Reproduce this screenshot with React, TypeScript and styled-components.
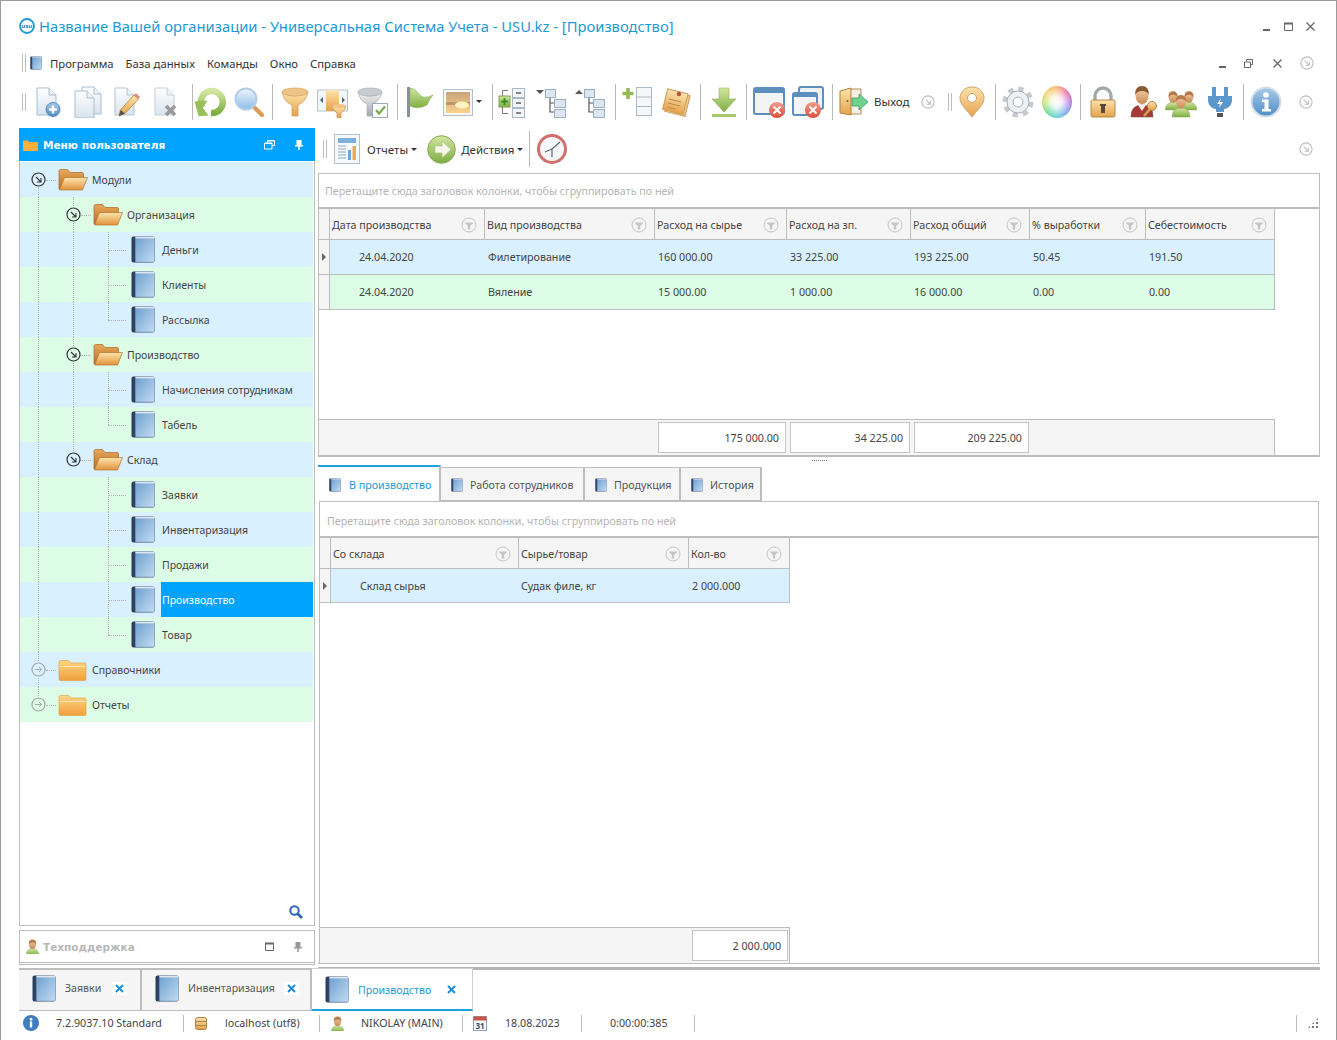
import React from "react";
import styled, { createGlobalStyle } from "styled-components";

const UI_FONT = `"Noto Sans", "Liberation Sans", sans-serif`;

const GlobalStyle = createGlobalStyle`
  html, body {
    margin: 0;
    padding: 0;
    background: #fff;
    overflow: hidden;
  }
  #root {
    height: 1040px;
  }
  * {
    box-sizing: border-box;
  }
`;

/* ---------- shared svg paint ---------- */

const DefsSvg = styled.svg`
  display: block;
  width: 0;
  height: 0;
`;

const grad = (id: string, a: string, b: string, x2 = 0, y2 = 1) => (
  <linearGradient id={id} x1="0" y1="0" x2={x2} y2={y2}>
    <stop offset="0" stopColor={a} />
    <stop offset="1" stopColor={b} />
  </linearGradient>
);

const SharedDefs = () => (
  <DefsSvg aria-hidden="true">
    <defs>
      {grad("gBook", "#6e9fd0", "#c3dcf1", 1, 1)}
      {grad("gSpine", "#2b3d5c", "#55698c", 1, 0)}
      {grad("gFolderBack", "#e9a95a", "#b76d26")}
      {grad("gFolderFront", "#fde6ad", "#e1933b")}
      {grad("gFolderShut", "#fdd684", "#f0a03a")}
      {grad("gPaper", "#ffffff", "#d8e3ee")}
      {grad("gBlue", "#a9cbe9", "#4f8cc4")}
      {grad("gOrange", "#fde3ac", "#e5a24c")}
      {grad("gGreen", "#d2e6a0", "#7fae42")}
      {grad("gGrey", "#f2f2f2", "#a4a9ae")}
      {grad("gRed", "#f29a8a", "#d9503e")}
      {grad("gGlass", "#eef6fd", "#8fbbe6")}
      {grad("gSky", "#c9a27c", "#fbd28c")}
      {grad("gSkin", "#f6cfa8", "#c98a56")}
    </defs>
  </DefsSvg>
);

const Ico: React.FC<{ w?: number; h?: number; vb?: string; children: React.ReactNode }> = ({
  w = 32,
  h = 32,
  vb,
  children,
}) => (
  <svg width={w} height={h} viewBox={vb || `0 0 ${w} ${h}`} style={{ display: "block", flex: "none" }}>
    {children}
  </svg>
);

/* ---------- icons ---------- */

const BookIcon: React.FC<{ w?: number; h?: number }> = ({ w = 24, h = 27 }) => (
  <Ico w={w} h={h} vb="0 0 24 27">
    <rect x="0.5" y="0.5" width="23" height="26" rx="2" fill="url(#gSpine)" />
    <rect x="4.5" y="1" width="19" height="25" rx="1" fill="url(#gBook)" stroke="#7b98b8" strokeWidth="0.6" />
    <rect x="4.5" y="0.8" width="19" height="1.6" fill="#dfe6ee" />
  </Ico>
);

const FolderOpen = () => (
  <Ico w={30} h={23}>
    <path d="M1 21V3q0-1.500 1.500-1.500h7l2.500 3h12q1.500 0 1.500 1.500v4H7L3 21Z" fill="url(#gFolderBack)" stroke="#a9692a" strokeWidth="0.7" />
    <path d="M1.500 22 6.500 9.500H29.500L24.500 22Z" fill="url(#gFolderFront)" stroke="#b8752f" strokeWidth="0.7" />
  </Ico>
);

const FolderShut = () => (
  <Ico w={29} h={22}>
    <path d="M1 3q0-1.500 1.500-1.500h8l2.500 2.500h13.500q1.500 0 1.500 1.500V20q0 1.500-1.500 1.500h-24Q1 21.500 1 20Z" fill="url(#gFolderShut)" stroke="#dd9a3f" strokeWidth="0.6" />
    <rect x="1.500" y="7" width="26" height="1" fill="#fde7b6" />
  </Ico>
);

const RoundArrow: React.FC<{ color?: string; side?: boolean; size?: number }> = ({
  color = "#333",
  side = false,
  size = 15,
}) => (
  <Ico w={size} h={size} vb="0 0 15 15">
    <circle cx="7.500" cy="7.500" r="6.500" fill="none" stroke={color} strokeWidth="1.200" />
    {side ? (
      <path d="M4 7.500h6.500M8 5l2.500 2.500L8 10" fill="none" stroke={color} strokeWidth="1" />
    ) : (
      <path d="M5 5l5 5M10 6v4H6" fill="none" stroke={color} strokeWidth="1.100" />
    )}
  </Ico>
);

const FilterMark = () => (
  <Ico w={16} h={16}>
    <circle cx="8" cy="8" r="7" fill="#f5f5f5" stroke="#c6c6c6" />
    <path d="M3.500 5.500h9L9.200 9v3.500H6.800V9Z" fill="#c6c6c6" />
  </Ico>
);

const Sheet: React.FC<{ x?: number; y?: number; tone?: string }> = ({ x = 0, y = 0, tone = "#a9bdd0" }) => (
  <g transform={`translate(${x} ${y})`}>
    <path d="M6 2H18L25 9V29H6Z" fill="url(#gPaper)" stroke={tone} />
    <path d="M18 2V9H25" fill="#eef3f8" stroke={tone} />
  </g>
);

const NewDocIcon = () => (
  <Ico>
    <Sheet />
    <circle cx="22" cy="23.500" r="7" fill="url(#gBlue)" stroke="#5b8fbd" />
    <path d="M22 19.500v8M18 23.500h8" stroke="#fff" strokeWidth="2.400" />
  </Ico>
);
const CopyDocIcon = () => (
  <Ico>
    <Sheet x={5} y={-1} />
    <Sheet x={-2} y={3} />
  </Ico>
);
const EditDocIcon = () => (
  <Ico>
    <Sheet tone="#b5c4d2" />
    <path d="M10 30l1.500-6L25 9l4.500 4L16 27.500Z" fill="url(#gOrange)" stroke="#b8803c" strokeWidth="0.8" />
    <path d="M10 30l1.500-6 4.500 3.500Z" fill="#5b5147" />
    <path d="M25 9l4.500 4 1.500-2-4-4Z" fill="#d98b7e" />
  </Ico>
);
const DeleteDocIcon = () => (
  <Ico>
    <Sheet tone="#c9cfd5" />
    <path d="M17 20l9 9M26 20l-9 9" stroke="#9a9a9a" strokeWidth="3.600" />
  </Ico>
);
const RefreshIcon = () => (
  <Ico>
    <path d="M8 21A11 11 0 1 1 17 27" fill="none" stroke="url(#gGreen)" strokeWidth="6.500" />
    <path d="M1 15h13L9 22l5 8H4Z" fill="#98bf58" transform="rotate(-4 8 22)" />
  </Ico>
);
const SearchIcon = () => (
  <Ico>
    <path d="M20 20l9 9" stroke="#dd9b55" strokeWidth="4.200" strokeLinecap="round" />
    <circle cx="13" cy="13" r="10.500" fill="url(#gGlass)" stroke="#b3cde4" strokeWidth="2" />
  </Ico>
);
const FunnelIcon = () => (
  <Ico>
    <path d="M3 6q13 8 26 0q-2 10-10 13v11h-6V19Q5 16 3 6Z" fill="url(#gOrange)" stroke="#c89555" strokeWidth="0.7" />
    <ellipse cx="16" cy="6" rx="13" ry="4" fill="#eec384" stroke="#d4a261" strokeWidth="0.7" />
  </Ico>
);
const ColumnFunnelIcon = () => (
  <Ico>
    <rect x="0.500" y="4" width="30" height="21" fill="#f2f6fa" stroke="#b7c4d0" />
    <rect x="9" y="4" width="13" height="21" fill="url(#gOrange)" />
    <path d="M6 11v6l-3-3ZM25 11v6l3-3Z" fill="#556270" />
    <path d="M15 20q7 3 14 0q-1 5-5 7v5h-4v-5q-4-2-5-7Z" fill="url(#gOrange)" stroke="#bb8a4c" strokeWidth="0.6" />
    <ellipse cx="22" cy="20" rx="7" ry="2" fill="#eec384" />
  </Ico>
);
const GreyFunnelIcon = () => (
  <Ico>
    <path d="M1 6q12 8 24 0q-2 9-9 12v12h-6V18Q3 15 1 6Z" fill="url(#gGrey)" stroke="#a8adb2" strokeWidth="0.7" />
    <ellipse cx="13" cy="6" rx="12" ry="4" fill="#c8ccd0" stroke="#a8adb2" strokeWidth="0.7" />
    <rect x="15.500" y="17.500" width="15" height="14" fill="#fbfdff" stroke="#97a9ba" />
    <path d="M19 24l3 3.500 6-7" fill="none" stroke="#79a948" strokeWidth="2.200" />
  </Ico>
);
const FlagIcon = () => (
  <Ico>
    <rect x="3" y="1" width="3" height="30" fill="#87919a" />
    <path d="M6 2q5 0 9 6t14 1q-4 5-6 10-9 5-17 1Z" fill="url(#gGreen)" stroke="#8fae62" strokeWidth="0.6" />
  </Ico>
);
const PictureIcon = () => (
  <Ico>
    <rect x="1.500" y="3.500" width="29" height="26" fill="#f6f8fb" stroke="#b6bec7" />
    <rect x="4" y="6" width="24" height="21" fill="url(#gSky)" />
    <rect x="4" y="16" width="24" height="3" fill="#8c6f50" opacity="0.45" />
    <ellipse cx="20" cy="19" rx="7" ry="3.500" fill="#fff3c4" />
  </Ico>
);
const Box: React.FC<{ x: number; y: number; w?: number; h?: number }> = ({ x, y, w = 11, h = 8 }) => (
  <rect x={x} y={y} width={w} height={h} fill="#dbe6f1" stroke="#9cb0c4" />
);
const TreeAddIcon = () => (
  <Ico>
    <path d="M10 4.500H4.500V27.500H10" fill="none" stroke="#777" />
    <rect x="1" y="10" width="11" height="11" fill="url(#gGreen)" stroke="#7fa04c" />
    <path d="M6.500 12v7M3 15.500h7" stroke="#3f8c2a" strokeWidth="2" />
    {[2, 12, 22].map((y) => (
      <g key={y}>
        <rect x="14.500" y={y + 0.500} width="12" height="9" fill="#f2f6fa" stroke="#a9b8c6" />
        <path d={`M18 ${y + 5}h5`} stroke="#555" strokeWidth="1.400" />
      </g>
    ))}
  </Ico>
);
const TreeIcon: React.FC<{ up?: boolean }> = ({ up }) => (
  <Ico>
    <path d={up ? "M1 8l4-4 4 4Z" : "M1 4h8L5 8Z"} fill="#555" />
    <path d="M15 11V26H19M15 17H19" fill="none" stroke="#555" strokeWidth="1.200" />
    <Box x={10.500} y={3.500} w={10} />
    <Box x={19.500} y={13.500} />
    <Box x={19.500} y={23.500} />
  </Ico>
);
const PlusListIcon = () => (
  <Ico>
    <path d="M6 2v11M0.500 7.500h11" stroke="#93bb55" strokeWidth="3.600" />
    <rect x="14.500" y="1.500" width="15" height="28" fill="#f5f8fb" stroke="#a9b8c6" />
    <path d="M14.500 11h15M14.500 20.500h15" stroke="#a9b8c6" />
  </Ico>
);
const NotesIcon = () => (
  <Ico>
    <rect x="6" y="7" width="21" height="21" fill="#f0c98a" stroke="#c99a5a" transform="rotate(14 16 17)" />
    <rect x="4" y="5" width="21" height="21" fill="url(#gOrange)" stroke="#c99a5a" transform="rotate(14 14 15)" />
    <path d="M8 13l12 3M7 17l12 3M6 21l8 2" stroke="#b58a52" strokeWidth="1" />
    <circle cx="18" cy="8" r="2.200" fill="#c9493e" />
  </Ico>
);
const DownloadIcon = () => (
  <Ico>
    <path d="M11 2h10v11h7L16 26 4 13h7Z" fill="url(#gGreen)" stroke="#93b25c" strokeWidth="0.6" />
    <rect x="4" y="28" width="24" height="3" fill="#a7c66e" />
  </Ico>
);
const RedCross: React.FC<{ x: number; y: number }> = ({ x, y }) => (
  <g>
    <circle cx={x} cy={y} r="8" fill="url(#gRed)" />
    <path d={`M${x - 3.500} ${y - 3.500}l7 7M${x + 3.500} ${y - 3.500}l-7 7`} stroke="#fff" strokeWidth="2" />
  </g>
);
const WindowCloseIcon = () => (
  <Ico>
    <rect x="1" y="2" width="30" height="26" rx="2" fill="#f3f4f6" stroke="#5c8fbe" strokeWidth="2" />
    <rect x="1" y="2" width="30" height="5" fill="#5c8fbe" />
    <RedCross x={24} y={24} />
  </Ico>
);
const WindowsCloseIcon = () => (
  <Ico>
    <rect x="7" y="1" width="24" height="22" rx="2" fill="#eef2f6" stroke="#5c8fbe" strokeWidth="2" />
    <rect x="1" y="7" width="24" height="22" rx="2" fill="#f3f4f6" stroke="#5c8fbe" strokeWidth="2" />
    <rect x="1" y="7" width="24" height="4" fill="#5c8fbe" />
    <RedCross x={21} y={24} />
  </Ico>
);
const DoorIcon = () => (
  <Ico>
    <path d="M10 3h13v25H10Z" fill="#f6f0e6" stroke="#b58a52" />
    <path d="M2 5l11-3v27L2 27Z" fill="url(#gOrange)" stroke="#b0803f" />
    <circle cx="9.500" cy="15" r="1" fill="#7a5a30" />
    <path d="M14 12h7V8l9 8-9 8v-4h-7Z" fill="#6fd38e" stroke="#3f9a63" strokeWidth="0.8" />
  </Ico>
);
const PinIcon = () => (
  <Ico>
    <path d="M16 1C8 1 4 7 4 12c0 7 8 13 12 19 4-6 12-12 12-19C28 7 24 1 16 1Z" fill="url(#gOrange)" stroke="#d2a565" />
    <circle cx="16" cy="12" r="4.500" fill="#fff" stroke="#d2a565" />
  </Ico>
);
const GearIcon = () => (
  <Ico>
    <circle cx="16" cy="16" r="13" fill="none" stroke="#c5cad0" strokeWidth="5" strokeDasharray="5.200 5" />
    <circle cx="16" cy="16" r="11" fill="#eef0f3" stroke="#a9afb7" />
    <circle cx="16" cy="16" r="5" fill="#fff" stroke="#a9afb7" />
  </Ico>
);
const ColorWheel = styled.span`
  display: block;
  flex: none;
  width: 30px;
  height: 32px;
  margin: 0 1px;
  border-radius: 50%;
  background:
    radial-gradient(circle at 50% 50%, #ffffff 0, rgba(255, 255, 255, 0.85) 25%, rgba(255, 255, 255, 0) 75%),
    conic-gradient(#f7b267, #f25fa8, #b06ad8, #6a9be8, #5fd0d8, #62d88a, #c9e060, #f7d267, #f7b267);
`;
const LockIcon = () => (
  <Ico>
    <path d="M8 15V10a8 8 0 0 1 16 0v5" fill="none" stroke="#a3a8ad" strokeWidth="3.400" />
    <rect x="4" y="14" width="24" height="17" rx="1.500" fill="url(#gOrange)" stroke="#b98a48" />
    <rect x="14" y="18" width="4" height="9" fill="#5a4a36" />
    <rect x="13" y="18" width="6" height="2" fill="#5a4a36" />
  </Ico>
);
const UserKeyIcon = () => (
  <Ico>
    <path d="M4 31q0-12 11-12t11 12Z" fill="#a63a36" stroke="#7d5048" strokeWidth="0.600" />
    <path d="M11 19l4 6 4-6Z" fill="#f4f0ea" />
    <ellipse cx="15" cy="10" rx="6.500" ry="8" fill="url(#gSkin)" />
    <path d="M8 9q0-9 7-9t7 9q-2-4-7-4T8 9Z" fill="#8c5a34" />
    <circle cx="25" cy="20" r="4.500" fill="url(#gOrange)" stroke="#b0803f" />
    <path d="M23 23l-6 7" stroke="#d4a056" strokeWidth="2.600" />
  </Ico>
);
const Person: React.FC<{ x: number; y: number; s?: number }> = ({ x, y, s = 1 }) => (
  <g transform={`translate(${x} ${y}) scale(${s})`}>
    <path d="M-9 20q0-9 9-9t9 9Z" fill="url(#gGreen)" stroke="#84a65a" strokeWidth="0.500" />
    <ellipse cx="0" cy="5" rx="5" ry="6.500" fill="url(#gSkin)" />
    <path d="M-5.500 5q0-7 5.500-7t5.500 7q-2-3-5.500-3t-5.500 3Z" fill="#b77c4a" />
  </g>
);
const UsersIcon = () => (
  <Ico>
    <Person x={8} y={7} s={0.85} />
    <Person x={24} y={7} s={0.85} />
    <Person x={16} y={11} />
  </Ico>
);
const PlugIcon = () => (
  <Ico>
    <rect x="8" y="1" width="4" height="11" fill="#5b96cc" />
    <rect x="20" y="1" width="4" height="11" fill="#5b96cc" />
    <path d="M4 10h24v4c0 6-5 9-8 9v3h-8v-3c-3 0-8-3-8-9Z" fill="#5b96cc" />
    <path d="M17 12l-4 6h3l-1 4 4-6h-3Z" fill="#fff" />
    <rect x="13" y="27" width="6" height="4" fill="#555" />
  </Ico>
);
const InfoIcon = () => (
  <Ico>
    <circle cx="16" cy="16" r="14.500" fill="url(#gBlue)" stroke="#d4dee8" strokeWidth="2" />
    <circle cx="16" cy="9" r="2.800" fill="#fff" />
    <path d="M12 13.500h6.500V23H21v2.500h-9V23h2.500v-7H12Z" fill="#fff" />
  </Ico>
);
const ReportIcon = () => (
  <Ico w={26} h={30} vb="0 0 26 30">
    <rect x="0.500" y="0.500" width="25" height="29" fill="#f6f9fc" stroke="#b2c0cd" />
    <rect x="4" y="4" width="18" height="5" fill="#7fb0dd" />
    <path d="M4 12h8M4 15h8M4 18h8M4 21h8M4 24h8" stroke="#8fa8c0" />
    <rect x="14" y="16" width="3" height="10" fill="#6fa5d8" />
    <rect x="18.500" y="12" width="3.500" height="14" fill="#eda95a" />
  </Ico>
);
const ActionIcon = () => (
  <Ico w={29} h={29}>
    <circle cx="14.500" cy="14.500" r="13.800" fill="url(#gGreen)" stroke="#8aa958" />
    <path d="M8 11h7V6l9 8.500-9 8.500v-5H8Z" fill="#f4f7ea" stroke="#a5bd78" strokeWidth="0.600" />
  </Ico>
);
const ClockIcon = () => (
  <Ico w={30} h={30}>
    <circle cx="15" cy="15" r="13.500" fill="#f4f6f7" stroke="#d0706a" strokeWidth="3" />
    <path d="M15 15L8 18M15 15L23 8M15 15v8" stroke="#5e6a70" strokeWidth="1.200" />
  </Ico>
);
const LogoIcon = () => (
  <Ico w={16} h={16}>
    <circle cx="8" cy="8" r="7" fill="#fff" stroke="#1c9ad6" strokeWidth="1.800" />
    <text x="8" y="10" textAnchor="middle" fontSize="6" fontWeight="700" fontFamily={UI_FONT} fill="#1c7fc0">
      usu
    </text>
  </Ico>
);
const SmallBook = () => <BookIcon w={12} h={14} />;
const MagnifierIcon = () => (
  <Ico w={14} h={14}>
    <circle cx="5.500" cy="5.500" r="4.200" fill="none" stroke="#2a66b5" strokeWidth="2" />
    <path d="M8.500 8.500L13 13" stroke="#2a66b5" strokeWidth="2.600" />
  </Ico>
);
const SupportIcon = () => (
  <Ico w={15} h={15}>
    <Person x={7.500} y={2} s={0.7} />
  </Ico>
);
const StatusInfoIcon = () => (
  <Ico w={16} h={16}>
    <circle cx="8" cy="8" r="8" fill="#3f7ebd" />
    <circle cx="8" cy="4.300" r="1.400" fill="#fff" />
    <rect x="6.800" y="6.500" width="2.400" height="6" fill="#fff" />
  </Ico>
);
const DatabaseIcon = () => (
  <Ico w={12} h={15}>
    <rect x="0.500" y="1.500" width="11" height="12" rx="2" fill="url(#gOrange)" stroke="#b0803f" />
    <path d="M1 5.500h10M1 9.500h10" stroke="#b0803f" />
  </Ico>
);
const CalendarIcon = () => (
  <Ico w={14} h={15}>
    <rect x="0.500" y="0.500" width="13" height="14" fill="#f6f8fb" stroke="#8ea3b8" />
    <rect x="0.500" y="0.500" width="13" height="4" fill="#c9534a" />
    <text x="7" y="13" textAnchor="middle" fontSize="8" fontWeight="700" fontFamily={UI_FONT} fill="#33506e">
      31
    </text>
  </Ico>
);
const HeaderFolderIcon = () => (
  <Ico w={15} h={11}>
    <path d="M0 1.500q0-1 1-1h4l1 1.500h8q1 0 1 1V10q0 1-1 1H1q-1 0-1-1Z" fill="#fbb040" />
  </Ico>
);
const PanelRestoreIcon = () => (
  <Ico w={11} h={10}>
    <path d="M3.500 2.500V.5h7v5h-2.500M.5 3h7.500v6H.5Z" fill="none" stroke="#fff" />
    <path d="M3.500 1h7M.5 3.500h7.500" stroke="#fff" />
  </Ico>
);
const PinGlyph: React.FC<{ color: string }> = ({ color }) => (
  <Ico w={8} h={10}>
    <path d="M1.500 0h5v5h1.500v1.500H4.800V10H3.200V6.500H0V5h1.500Z" fill={color} />
  </Ico>
);
const WinMin = () => (
  <Ico w={9} h={9}>
    <rect x="1" y="7" width="7" height="2" fill="#666" />
  </Ico>
);
const WinMax = () => (
  <Ico w={9} h={9}>
    <path d="M.5 1.500h8v7h-8Z" fill="none" stroke="#666" />
    <rect x="0" y="0.500" width="9" height="2" fill="#666" />
  </Ico>
);
const WinRestore = () => (
  <Ico w={9} h={9}>
    <path d="M2.500 2V.5h6v5H7M.5 3h6v5.500h-6Z" fill="none" stroke="#666" />
  </Ico>
);
const WinClose = () => (
  <Ico w={9} h={9}>
    <path d="M.5.500l8 8M8.500.500l-8 8" stroke="#666" strokeWidth="1.300" />
  </Ico>
);
const TabCross = () => (
  <Ico w={9} h={9}>
    <path d="M1 1l7 7M8 1l-7 7" stroke="#1c8fd8" strokeWidth="2" />
  </Ico>
);

/* ---------- window, title, menu ---------- */

const Window = styled.div`
  height: 1040px;
  display: flex;
  flex-direction: column;
  border: 1px solid #9b9b9b;
  border-bottom: 0;
  font-family: ${UI_FONT};
  color: #444;
  overflow: hidden;
`;

const TitleBar = styled.div`
  flex: none;
  height: 52px;
  display: flex;
  align-items: center;
  padding: 0 21px 2px 18px;
  color: #1c9ad6;
  font-size: 14.75px;
`;

const TitleText = styled.span`
  margin-left: 4px;
  white-space: nowrap;
`;

const WindowButtons = styled.div<{ $gap: number }>`
  margin-left: auto;
  display: flex;
  align-items: center;
  gap: ${(p) => p.$gap}px;
`;

const MenuBar = styled.div`
  flex: none;
  height: 20px;
  display: flex;
  align-items: center;
  padding: 0 22px 0 21px;
  font-size: 11.3px;
  color: #333;
`;

const Gripper = styled.span`
  flex: none;
  width: 4px;
  height: 18px;
  border-left: 1px solid #bdbdbd;
  border-right: 1px solid #bdbdbd;
`;

const MenuBook = styled.span`
  margin: 0 8px 0 4px;
`;

const MenuItem = styled.span`
  margin-right: 12px;
  white-space: nowrap;
`;

const MenuControls = styled.div`
  margin-left: auto;
  display: flex;
  align-items: center;
`;

const MenuControl = styled.span<{ $ml: number }>`
  margin-left: ${(p) => p.$ml}px;
`;

/* ---------- main toolbar ---------- */

const ToolBar = styled.div`
  flex: none;
  height: 55px;
  padding: 2px 0 0 21px;
  display: flex;
  align-items: center;
`;

const ToolSlot = styled.span<{ $ml: number }>`
  flex: none;
  display: flex;
  align-items: center;
  margin-left: ${(p) => p.$ml}px;
`;

const ToolSep = styled.span<{ $ml: number }>`
  flex: none;
  width: 1px;
  height: 36px;
  background: #b9b9b9;
  margin-left: ${(p) => p.$ml}px;
`;

const Caret = styled.span`
  display: block;
  width: 0;
  height: 0;
  border-left: 3px solid transparent;
  border-right: 3px solid transparent;
  border-top: 3px solid #333;
`;

const ExitLabel = styled.span`
  font-size: 11.5px;
  color: #333;
  width: 36px;
  white-space: nowrap;
`;

/* ---------- main area ---------- */

const Main = styled.div`
  flex: none;
  height: 842px;
  display: flex;
  padding-left: 18px;
  gap: 3px;
`;

const LeftColumn = styled.div`
  flex: none;
  width: 296px;
  display: flex;
  flex-direction: column;
  gap: 4px;
`;

const MenuPanel = styled.div`
  flex: none;
  height: 798px;
  display: flex;
  flex-direction: column;
  border: 1px solid #bdbdbd;
  border-top: 0;
`;

const PanelHeader = styled.div`
  flex: none;
  height: 33px;
  margin: 0 -1px 1px;
  padding: 1px 12px 0 4px;
  display: flex;
  align-items: center;
  background: #00a4ff;
  color: #fff;
`;

const PanelTitle = styled.span<{ $muted?: boolean }>`
  margin-left: ${(p) => (p.$muted ? 3 : 5)}px;
  font-family: "DejaVu Sans", sans-serif;
  font-size: 10.5px;
  font-weight: 700;
  color: ${(p) => (p.$muted ? "#b8b8b8" : "#fff")};
`;

const PanelIcons = styled.span`
  margin-left: auto;
  display: flex;
  align-items: center;
  gap: 20px;
`;

const TreeList = styled.div`
  flex: none;
`;

const TreeRowBox = styled.div<{ $even: boolean }>`
  height: 35px;
  margin-right: 1px;
  padding-left: 1px;
  display: flex;
  align-items: center;
  background: ${(p) => (p.$even ? "#d9f0ff" : "#dcfce6")};
  font-size: 10.5px;
  color: #444;
`;

const Slot = styled.span<{ $up: boolean; $down: boolean; $branch: boolean; $knob: boolean }>`
  flex: none;
  position: relative;
  width: 35px;
  height: 100%;
  display: flex;
  align-items: center;
  justify-content: center;

  &::before {
    content: "";
    display: ${(p) => (p.$up || p.$down ? "block" : "none")};
    position: absolute;
    left: 17px;
    top: ${(p) => (p.$up ? "0" : "calc(50% + 7px)")};
    bottom: ${(p) => (p.$down ? "0" : p.$knob ? "calc(50% + 7px)" : "50%")};
    border-left: 1px dotted #b4b4b4;
  }

  &::after {
    content: "";
    display: ${(p) => (p.$branch ? "block" : "none")};
    position: absolute;
    left: ${(p) => (p.$knob ? 25 : 17)}px;
    right: 0;
    top: 50%;
    border-top: 1px dotted #b4b4b4;
  }
`;

/* a knob sits on top of the dotted line that runs through its slot */
const Knob = styled.span<{ $bg: string }>`
  position: relative;
  z-index: 1;
  border-radius: 50%;
  background: ${(p) => p.$bg};
`;

const TreeIconBox = styled.span<{ $ml: number }>`
  flex: none;
  margin-left: ${(p) => p.$ml}px;
`;

const TreeLabel = styled.span<{ $ml: number; $selected?: boolean }>`
  align-self: stretch;
  flex: 1;
  display: flex;
  align-items: center;
  margin-left: ${(p) => p.$ml}px;
  padding-left: 1px;
  white-space: nowrap;
  background: ${(p) => (p.$selected ? "#00a4ff" : "transparent")};
  color: ${(p) => (p.$selected ? "#fff" : "#444")};
`;

const PanelFoot = styled.div`
  margin-top: auto;
  height: 27px;
  padding-right: 11px;
  display: flex;
  align-items: center;
  justify-content: flex-end;
`;

const SupportPanel = styled.div`
  flex: none;
  height: 35px;
  display: flex;
  align-items: center;
  padding: 0 12px 0 5px;
  border: 1px solid #bdbdbd;
  border-bottom: 3px double #bdbdbd;
`;

const RightColumn = styled.div`
  flex: none;
  width: 1002px;
  display: flex;
  flex-direction: column;
`;

const SubBar = styled.div`
  flex: none;
  height: 45px;
  padding: 0 6px 3px 5px;
  display: flex;
  align-items: center;
  font-size: 11.5px;
  color: #333;
`;

const SubLabel = styled.span<{ $ml: number }>`
  margin-left: ${(p) => p.$ml}px;
  display: flex;
  align-items: center;
  gap: 3px;
  white-space: nowrap;
`;

const SubSep = styled.span`
  flex: none;
  width: 1px;
  height: 36px;
  margin: 0 7px 0 6px;
  background: #b9b9b9;
`;

const SubIcon = styled.span<{ $ml: number }>`
  flex: none;
  margin-left: ${(p) => p.$ml}px;
`;

const SubEnd = styled.span`
  margin-left: auto;
  margin-right: 1px;
`;

/* ---------- data grids ---------- */

const GridFrame = styled.div<{ $height?: number }>`
  display: flex;
  flex-direction: column;
  border-left: 1px solid #bdbdbd;
  border-right: 1px solid #bdbdbd;
  ${(p) => (p.$height ? `flex: none; height: ${p.$height}px;` : "flex: 1; min-height: 0;")}
`;

const GroupHint = styled.div<{ $height?: number; $top?: number; $left?: number }>`
  flex: none;
  height: ${(p) => p.$height ?? 36}px;
  padding: ${(p) => p.$top ?? 1}px 0 0 ${(p) => p.$left ?? 6}px;
  display: flex;
  align-items: center;
  border-top: 1px solid #bdbdbd;
  border-bottom: 2px solid #bdbdbd;
  font-size: 10.7px;
  color: #b4b4b4;
  white-space: nowrap;
`;

const GridRow = styled.div<{ $cols: string; $height: number; $tone?: string; $width: number }>`
  flex: none;
  display: grid;
  grid-template-columns: ${(p) => p.$cols};
  width: ${(p) => p.$width}px;
  height: ${(p) => p.$height}px;
  background: ${(p) => p.$tone || "#f5f5f5"};
  border-bottom: 1px solid #bdbdbd;
  border-right: 1px solid #bdbdbd;
  font-size: 10.7px;
  color: #444;
`;

const HeadCell = styled.div`
  display: flex;
  align-items: center;
  justify-content: space-between;
  padding: 1px 7px 0 2px;
  border-right: 1px solid #bdbdbd;
  white-space: nowrap;

  &:last-child {
    border-right: 0;
  }
`;

const Indicator = styled.div`
  display: flex;
  align-items: center;
  justify-content: center;
  background: #f5f5f5;
  border-right: 1px solid #bdbdbd;
`;

const RowMarker = styled.span`
  display: block;
  width: 0;
  height: 0;
  border-top: 4px solid transparent;
  border-bottom: 4px solid transparent;
  border-left: 4px solid #666;
`;

const DataCell = styled.div<{ $pad?: number; $low?: boolean }>`
  display: flex;
  align-items: center;
  padding-left: ${(p) => p.$pad ?? 3}px;
  padding-bottom: ${(p) => (p.$low ? 0 : 1)}px;
  white-space: nowrap;
`;

const GridBody = styled.div`
  flex: 1;
  min-height: 0;
`;

const FooterRow = styled.div<{ $cols: string; $width: number; $height: number }>`
  flex: none;
  display: grid;
  grid-template-columns: ${(p) => p.$cols};
  width: ${(p) => p.$width}px;
  height: ${(p) => p.$height}px;
  background: #f5f5f5;
  border-top: 1px solid #bdbdbd;
  border-right: 1px solid #bdbdbd;
  font-size: 10.7px;
  color: #444;
`;

const SumBox = styled.div`
  margin: 2px 1px 2px 3px;
  padding-right: 6px;
  display: flex;
  align-items: center;
  justify-content: flex-end;
  background: #fff;
  border: 1px solid #c4c4c4;
  white-space: nowrap;
`;

const FrameRule = styled.div`
  flex: none;
  height: 2px;
  margin: 0 -1px;
  background: #bdbdbd;
`;

const Splitter = styled.div`
  flex: none;
  height: 8px;
  display: flex;
  align-items: center;
  justify-content: center;
`;

const SplitDots = styled.span`
  display: block;
  width: 15px;
  margin-top: -2px;
  border-top: 1px dotted #777;
`;

const TabStrip = styled.div`
  flex: none;
  height: 36px;
  display: flex;
  align-items: flex-end;
`;

const DetailTab = styled.div<{ $active?: boolean; $width: number }>`
  flex: none;
  width: ${(p) => p.$width}px;
  height: ${(p) => (p.$active ? 36 : 34)}px;
  display: flex;
  align-items: center;
  gap: ${(p) => (p.$active ? 8 : 7)}px;
  padding-left: ${(p) => (p.$active ? 11 : 10)}px;
  padding-top: 1px;
  font-size: 10.7px;
  white-space: nowrap;
  background: ${(p) => (p.$active ? "#fff" : "#f5f5f5")};
  color: ${(p) => (p.$active ? "#1c9ad6" : "#555")};
  border-top: ${(p) => (p.$active ? "2px solid #1da1e0" : "1px solid #bdbdbd")};
  border-right: 2px solid #bdbdbd;
  border-bottom: ${(p) => (p.$active ? "0" : "1px solid #bdbdbd")};
`;

const DetailBox = styled.div`
  flex: 1;
  min-height: 0;
  margin: 0 1px;
  display: flex;
  flex-direction: column;
`;

const FrameBase = styled.div`
  flex: none;
  height: 7px;
  margin: 0 -1px;
  border-top: 1px solid #bdbdbd;
  border-bottom: 3px solid #b5b5b5;
`;

/* ---------- bottom strip and status bar ---------- */

const DocBar = styled.div`
  flex: none;
  height: 43px;
  margin-top: -2px;
  padding-left: 18px;
  display: flex;
`;

const DocTab = styled.div<{ $active?: boolean; $width: number }>`
  flex: none;
  width: ${(p) => p.$width}px;
  display: flex;
  align-items: center;
  padding: ${(p) => (p.$active ? "1px 0 0 13px" : "0 0 4px 13px")};
  font-size: 10.6px;
  white-space: nowrap;
  background: ${(p) => (p.$active ? "#fff" : "#f5f5f5")};
  color: ${(p) => (p.$active ? "#1c9ad6" : "#555")};
  border-top: ${(p) => (p.$active ? "1px solid #d0d0d0" : "2px solid #bdbdbd")};
  border-right: ${(p) => (p.$active ? "1px solid #d0d0d0" : "2px solid #bdbdbd")};
  border-bottom: ${(p) => (p.$active ? "2px solid #1da1e0" : "1px solid #bdbdbd")};
`;

const DocLabel = styled.span`
  margin-left: 9px;
`;

const DocClose = styled.span<{ $mr: number }>`
  margin-left: auto;
  margin-right: ${(p) => p.$mr}px;
  padding: 2px 3px;
  background: #fff;
`;

const StatusBar = styled.div`
  flex: 1;
  display: flex;
  align-items: center;
  padding: 0 0 5px 22px;
  font-size: 10.7px;
  color: #444;
  white-space: nowrap;
`;

const StatusText = styled.span<{ $ml: number; $width: number }>`
  flex: none;
  margin-left: ${(p) => p.$ml}px;
  width: ${(p) => p.$width}px;
`;

const StatusSep = styled.span<{ $ml: number }>`
  flex: none;
  width: 1px;
  height: 17px;
  background: #bdbdbd;
  margin-left: ${(p) => p.$ml}px;
`;

const StatusIcon = styled.span<{ $ml: number }>`
  flex: none;
  margin-left: ${(p) => p.$ml}px;
`;

const ResizeGrip = styled.span`
  flex: none;
  margin-left: 10px;
  width: 12px;
  height: 12px;
  background-image: radial-gradient(circle, #777 0.8px, transparent 1px);
  background-size: 4px 4px;
  clip-path: polygon(100% 0, 100% 100%, 0 100%);
`;

/* ---------- data ---------- */

type TreeItem = { label: string; icon: "open" | "shut" | "book"; slots: string; selected?: boolean };

// slot codes: | line, space nothing, T branch, L last branch,
// o root knob, O knob on line, U last knob, c closed knob on line, C last closed knob
const treeItems: TreeItem[] = [
  { label: "Модули", icon: "open", slots: "o" },
  { label: "Организация", icon: "open", slots: "|O" },
  { label: "Деньги", icon: "book", slots: "||T" },
  { label: "Клиенты", icon: "book", slots: "||T" },
  { label: "Рассылка", icon: "book", slots: "||L" },
  { label: "Производство", icon: "open", slots: "|O" },
  { label: "Начисления сотрудникам", icon: "book", slots: "||T" },
  { label: "Табель", icon: "book", slots: "||L" },
  { label: "Склад", icon: "open", slots: "|U" },
  { label: "Заявки", icon: "book", slots: "| T" },
  { label: "Инвентаризация", icon: "book", slots: "| T" },
  { label: "Продажи", icon: "book", slots: "| T" },
  { label: "Производство", icon: "book", slots: "| T", selected: true },
  { label: "Товар", icon: "book", slots: "| L" },
  { label: "Справочники", icon: "shut", slots: "c" },
  { label: "Отчеты", icon: "shut", slots: "C" },
];

const TreeSlot: React.FC<{ code: string; bg: string }> = ({ code, bg }) => {
  const knob = "oOUcC".includes(code);
  const closed = code === "c" || code === "C";
  return (
    <Slot
      $up={"|TLOUcC".includes(code)}
      $down={"|ToOc".includes(code)}
      $branch={knob || code === "T" || code === "L"}
      $knob={knob}
    >
      {knob && (
        <Knob $bg={bg}>
          <RoundArrow color={closed ? "#a9a9a9" : "#333"} side={closed} />
        </Knob>
      )}
    </Slot>
  );
};

const topCols = "11px 155px 170px 132px 124px 119px 116px 128px";
const topHeads = ["Дата производства", "Вид производства", "Расход на сырье", "Расход на зп.", "Расход общий", "% выработки", "Себестоимость"];
const topRows = [
  { tone: "#d9f0ff", marker: true, cells: ["24.04.2020", "Филетирование", "160 000.00", "33 225.00", "193 225.00", "50.45", "191.50"] },
  { tone: "#dcfce6", marker: false, cells: ["24.04.2020", "Вяление", "15 000.00", "1 000.00", "16 000.00", "0.00", "0.00"] },
];

const detailCols = "11px 188px 170px 100px";
const detailHeads = ["Со склада", "Сырье/товар", "Кол-во"];

const App: React.FC = () => (
  <>
    <GlobalStyle />
    <SharedDefs />
    <Window>
      <TitleBar>
        <LogoIcon />
        <TitleText>Название Вашей организации - Универсальная Система Учета - USU.kz - [Производство]</TitleText>
        <WindowButtons $gap={13}>
          <WinMin />
          <WinMax />
          <WinClose />
        </WindowButtons>
      </TitleBar>

      <MenuBar>
        <Gripper />
        <MenuBook>
          <SmallBook />
        </MenuBook>
        {["Программа", "База данных", "Команды", "Окно", "Справка"].map((m) => (
          <MenuItem key={m}>{m}</MenuItem>
        ))}
        <MenuControls>
          <MenuControl $ml={0}>
            <WinMin />
          </MenuControl>
          <MenuControl $ml={17}>
            <WinRestore />
          </MenuControl>
          <MenuControl $ml={20}>
            <WinClose />
          </MenuControl>
          <MenuControl $ml={18}>
            <RoundArrow color="#bdbdbd" size={14} />
          </MenuControl>
        </MenuControls>
      </MenuBar>

      <ToolBar>
        <Gripper />
        <ToolSlot $ml={5}><NewDocIcon /></ToolSlot>
        <ToolSlot $ml={8}><CopyDocIcon /></ToolSlot>
        <ToolSlot $ml={6}><EditDocIcon /></ToolSlot>
        <ToolSlot $ml={8}><DeleteDocIcon /></ToolSlot>
        <ToolSep $ml={11} />
        <ToolSlot $ml={1}><RefreshIcon /></ToolSlot>
        <ToolSlot $ml={7}><SearchIcon /></ToolSlot>
        <ToolSep $ml={7} />
        <ToolSlot $ml={6}><FunnelIcon /></ToolSlot>
        <ToolSlot $ml={6}><ColumnFunnelIcon /></ToolSlot>
        <ToolSlot $ml={8}><GreyFunnelIcon /></ToolSlot>
        <ToolSep $ml={8} />
        <ToolSlot $ml={6}><FlagIcon /></ToolSlot>
        <ToolSlot $ml={6}><PictureIcon /></ToolSlot>
        <ToolSlot $ml={2}><Caret /></ToolSlot>
        <ToolSep $ml={10} />
        <ToolSlot $ml={5}><TreeAddIcon /></ToolSlot>
        <ToolSlot $ml={5}><TreeIcon /></ToolSlot>
        <ToolSlot $ml={7}><TreeIcon up /></ToolSlot>
        <ToolSep $ml={9} />
        <ToolSlot $ml={6}><PlusListIcon /></ToolSlot>
        <ToolSlot $ml={7}><NotesIcon /></ToolSlot>
        <ToolSep $ml={7} />
        <ToolSlot $ml={7}><DownloadIcon /></ToolSlot>
        <ToolSep $ml={6} />
        <ToolSlot $ml={6}><WindowCloseIcon /></ToolSlot>
        <ToolSlot $ml={7}><WindowsCloseIcon /></ToolSlot>
        <ToolSep $ml={8} />
        <ToolSlot $ml={5}><DoorIcon /></ToolSlot>
        <ToolSlot $ml={4}><ExitLabel>Выход</ExitLabel></ToolSlot>
        <ToolSlot $ml={11}><RoundArrow color="#bdbdbd" size={14} /></ToolSlot>
        <ToolSlot $ml={13}><Gripper /></ToolSlot>
        <ToolSlot $ml={4}><PinIcon /></ToolSlot>
        <ToolSep $ml={7} />
        <ToolSlot $ml={6}><GearIcon /></ToolSlot>
        <ToolSlot $ml={7}><ColorWheel /></ToolSlot>
        <ToolSep $ml={7} />
        <ToolSlot $ml={6}><LockIcon /></ToolSlot>
        <ToolSlot $ml={8}><UserKeyIcon /></ToolSlot>
        <ToolSlot $ml={6}><UsersIcon /></ToolSlot>
        <ToolSlot $ml={7}><PlugIcon /></ToolSlot>
        <ToolSep $ml={7} />
        <ToolSlot $ml={6}><InfoIcon /></ToolSlot>
        <ToolSlot $ml={17}><RoundArrow color="#bdbdbd" size={14} /></ToolSlot>
      </ToolBar>

      <Main>
        <LeftColumn>
          <MenuPanel>
            <PanelHeader>
              <HeaderFolderIcon />
              <PanelTitle>Меню пользователя</PanelTitle>
              <PanelIcons>
                <PanelRestoreIcon />
                <PinGlyph color="#fff" />
              </PanelIcons>
            </PanelHeader>
            <TreeList>
              {treeItems.map((item, i) => {
                const bg = i % 2 === 0 ? "#d9f0ff" : "#dcfce6";
                return (
                  <TreeRowBox key={i} $even={i % 2 === 0}>
                    {item.slots.split("").map((code, j) => (
                      <TreeSlot key={j} code={code} bg={bg} />
                    ))}
                    <TreeIconBox $ml={item.icon === "book" ? 5 : 2}>
                      {item.icon === "open" && <FolderOpen />}
                      {item.icon === "shut" && <FolderShut />}
                      {item.icon === "book" && <BookIcon />}
                    </TreeIconBox>
                    <TreeLabel $ml={item.icon === "book" ? 6 : item.icon === "open" ? 3 : 4} $selected={item.selected}>
                      {item.label}
                    </TreeLabel>
                  </TreeRowBox>
                );
              })}
            </TreeList>
            <PanelFoot>
              <MagnifierIcon />
            </PanelFoot>
          </MenuPanel>
          <SupportPanel>
            <SupportIcon />
            <PanelTitle $muted>Техподдержка</PanelTitle>
            <PanelIcons>
              <WinMax />
              <PinGlyph color="#999" />
            </PanelIcons>
          </SupportPanel>
        </LeftColumn>

        <RightColumn>
          <SubBar>
            <Gripper />
            <SubIcon $ml={7}><ReportIcon /></SubIcon>
            <SubLabel $ml={7}>
              Отчеты <Caret />
            </SubLabel>
            <SubIcon $ml={10}><ActionIcon /></SubIcon>
            <SubLabel $ml={5}>
              Действия <Caret />
            </SubLabel>
            <SubSep />
            <SubIcon $ml={0}><ClockIcon /></SubIcon>
            <SubEnd><RoundArrow color="#bdbdbd" size={14} /></SubEnd>
          </SubBar>

          <GridFrame $height={284}>
            <GroupHint>Перетащите сюда заголовок колонки, чтобы сгруппировать по ней</GroupHint>
            <GridRow $cols={topCols} $width={956} $height={31}>
              <Indicator />
              {topHeads.map((h) => (
                <HeadCell key={h}>
                  {h}
                  <FilterMark />
                </HeadCell>
              ))}
            </GridRow>
            {topRows.map((row, i) => (
              <GridRow key={i} $cols={topCols} $width={956} $height={35} $tone={row.tone}>
                <Indicator>{row.marker && <RowMarker />}</Indicator>
                {row.cells.map((c, j) => (
                  <DataCell key={j} $pad={j === 0 ? 29 : undefined}>
                    {c}
                  </DataCell>
                ))}
              </GridRow>
            ))}
            <GridBody />
            <FooterRow $cols={topCols} $width={956} $height={36}>
              <span />
              <span />
              <span />
              <SumBox>175 000.00</SumBox>
              <SumBox>34 225.00</SumBox>
              <SumBox>209 225.00</SumBox>
            </FooterRow>
            <FrameRule />
          </GridFrame>

          <Splitter>
            <SplitDots />
          </Splitter>

          <TabStrip>
            <DetailTab $active $width={123}>
              <SmallBook />
              В производство
            </DetailTab>
            <DetailTab $width={144}>
              <SmallBook />
              Работа сотрудников
            </DetailTab>
            <DetailTab $width={96}>
              <SmallBook />
              Продукция
            </DetailTab>
            <DetailTab $width={81}>
              <SmallBook />
              История
            </DetailTab>
          </TabStrip>

          <DetailBox>
            <GridFrame>
              <GroupHint $height={37} $top={3} $left={7}>
                Перетащите сюда заголовок колонки, чтобы сгруппировать по ней
              </GroupHint>
              <GridRow $cols={detailCols} $width={470} $height={31}>
                <Indicator />
                {detailHeads.map((h) => (
                  <HeadCell key={h}>
                    {h}
                    <FilterMark />
                  </HeadCell>
                ))}
              </GridRow>
              <GridRow $cols={detailCols} $width={470} $height={34} $tone="#d9f0ff">
                <Indicator>
                  <RowMarker />
                </Indicator>
                <DataCell $pad={29} $low>Склад сырья</DataCell>
                <DataCell $pad={2} $low>Судак филе, кг</DataCell>
                <DataCell $low>2 000.000</DataCell>
              </GridRow>
              <GridBody />
              <FooterRow $cols={detailCols} $width={470} $height={36}>
                <span />
                <span />
                <span />
                <SumBox>2 000.000</SumBox>
              </FooterRow>
            </GridFrame>
            <FrameBase />
          </DetailBox>
        </RightColumn>
      </Main>

      <DocBar>
        <DocTab $width={123}>
          <BookIcon />
          <DocLabel>Заявки</DocLabel>
          <DocClose $mr={13}><TabCross /></DocClose>
        </DocTab>
        <DocTab $width={170}>
          <BookIcon />
          <DocLabel>Инвентаризация</DocLabel>
          <DocClose $mr={11}><TabCross /></DocClose>
        </DocTab>
        <DocTab $active $width={161}>
          <BookIcon />
          <DocLabel>Производство</DocLabel>
          <DocClose $mr={13}><TabCross /></DocClose>
        </DocTab>
      </DocBar>

      <StatusBar>
        <StatusInfoIcon />
        <StatusText $ml={17} $width={107}>7.2.9037.10 Standard</StatusText>
        <StatusSep $ml={20} />
        <StatusIcon $ml={11}><DatabaseIcon /></StatusIcon>
        <StatusText $ml={18} $width={73}>localhost (utf8)</StatusText>
        <StatusSep $ml={21} />
        <StatusIcon $ml={10}><SupportIcon /></StatusIcon>
        <StatusText $ml={16} $width={80}>NIKOLAY (MAIN)</StatusText>
        <StatusSep $ml={21} />
        <StatusIcon $ml={10}><CalendarIcon /></StatusIcon>
        <StatusText $ml={18} $width={56}>18.08.2023</StatusText>
        <StatusSep $ml={20} />
        <StatusText $ml={28} $width={60}>0:00:00:385</StatusText>
        <StatusSep $ml={24} />
        <StatusSep $ml={601} />
        <ResizeGrip />
      </StatusBar>
    </Window>
  </>
);

export default App;
